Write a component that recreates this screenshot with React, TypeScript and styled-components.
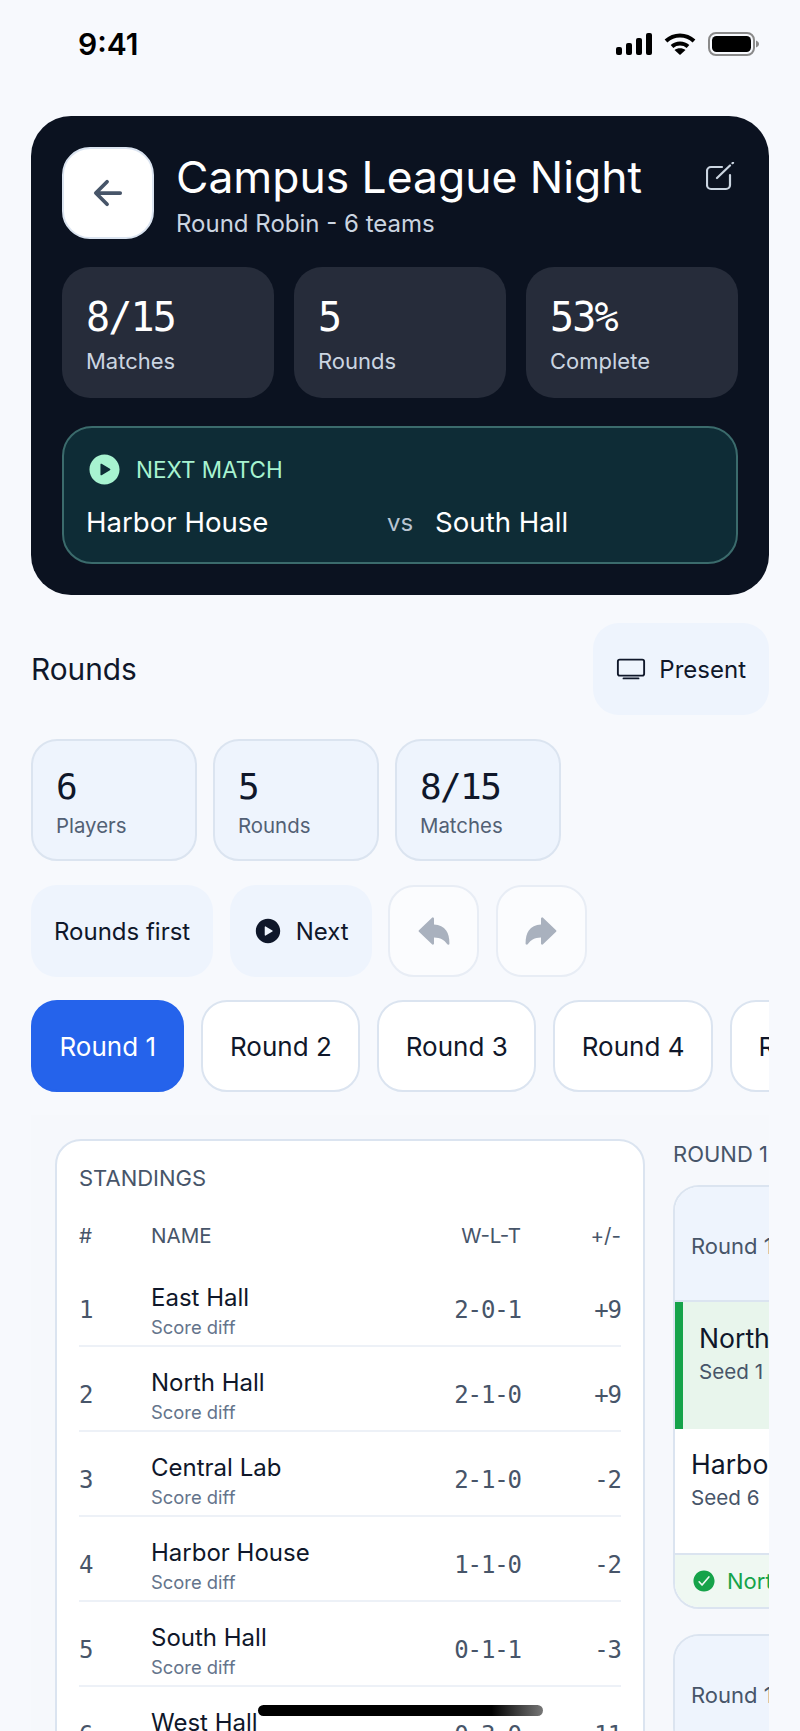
import React from 'react';
import styled, { createGlobalStyle } from 'styled-components';
import {
  IoArrowBack,
  IoArrowRedo,
  IoArrowUndo,
  IoCheckmarkCircle,
  IoPlayCircle,
  IoTvOutline,
} from 'react-icons/io5';

const SANS = `Inter, "Liberation Sans", sans-serif`;
const MONO = `"DejaVu Sans Mono", "Liberation Mono", monospace`;

const GlobalStyle = createGlobalStyle`
  html, body {
    margin: 0;
    padding: 0;
    background: #f7f9fd;
  }
  body {
    font-family: ${SANS};
    color: #0f172a;
  }
  * {
    box-sizing: border-box;
  }
`;

const Page = styled.div`
  position: relative;
  width: 800px;
  height: 1731px;
  overflow: hidden;
`;

const StatusBar = styled.div`
  height: 88px;
  padding: 0 41px 0 78px;
  display: flex;
  align-items: center;
  justify-content: space-between;
`;

const Clock = styled.span`
  font-size: 30px;
  font-weight: 600;
  color: #000;
`;

const StatusIcons = styled.div`
  display: flex;
  align-items: center;
  gap: 12px;
`;

const Main = styled.main`
  padding: 28px 31px 0;
  display: flex;
  flex-direction: column;
`;

const Hero = styled.section`
  height: 479px;
  padding: 31px;
  background: #0b1220;
  border-radius: 40px;
  display: flex;
  flex-direction: column;
`;

const HeroTop = styled.div`
  display: flex;
  gap: 22px;
  align-items: flex-start;
`;

const BackButton = styled.div`
  width: 92px;
  height: 92px;
  flex: none;
  border-radius: 28px;
  background: #fff;
  border: 2px solid #dbe4f0;
  color: #475569;
  display: flex;
  align-items: center;
  justify-content: center;
`;

const HeroText = styled.div`
  flex: 1;
  min-width: 0;
`;

const HeroTitle = styled.h1`
  margin: 0;
  font-size: 44.4px;
  line-height: 60px;
  font-weight: 400;
  color: #fff;
`;

const HeroSub = styled.div`
  margin-top: 1px;
  font-size: 24px;
  line-height: 31px;
  color: #cbd5e1;
`;

const EditIcon = styled.svg`
  flex: none;
  margin-top: 15px;
`;

const HeroStats = styled.div`
  display: grid;
  grid-template-columns: repeat(3, 1fr);
  gap: 20px;
  margin-top: 28px;
`;

const HeroStat = styled.div`
  height: 131px;
  padding: 26px 24px;
  border-radius: 28px;
  background: #262c3a;
`;

const Value = styled.div<{ $dark?: boolean }>`
  font-family: ${MONO};
  font-size: ${(p) => (p.$dark ? '36px' : '40px')};
  letter-spacing: -0.045em;
  line-height: 48px;
  color: ${(p) => (p.$dark ? '#0f172a' : '#fff')};
`;

const HeroStatLabel = styled.div`
  font-size: 22px;
  line-height: 30px;
  margin-top: 5px;
  color: #cbd5e1;
`;

const NextPanel = styled.div`
  margin-top: 28px;
  height: 138px;
  padding: 23px 22px;
  border-radius: 30px;
  background: #0e2c36;
  border: 2px solid #3b6b6c;
`;

const NextLabel = styled.div`
  display: flex;
  align-items: center;
  gap: 13px;
  font-size: 22.5px;
  line-height: 37px;
  color: #a7f3d0;
`;

const NextTeams = styled.div`
  display: flex;
  align-items: center;
  gap: 22px;
  margin-top: 15px;
`;

const NextTeam = styled.div`
  flex: 1;
  font-size: 27.6px;
  line-height: 38px;
  color: #fff;
`;

const Versus = styled.span`
  font-size: 24px;
  color: #b8c4d2;
`;

const SectionHead = styled.div`
  margin-top: 28px;
  display: flex;
  align-items: center;
  justify-content: space-between;
`;

const SectionTitle = styled.h2`
  margin: 0;
  font-size: 29.8px;
  font-weight: 400;
`;

const SoftButton = styled.div`
  height: 92px;
  padding: 0 23px;
  display: flex;
  align-items: center;
  gap: 13px;
  border-radius: 26px;
  background: #eef4fd;
  font-size: 24px;
  color: #0f172a;
`;

const Summary = styled.div`
  margin-top: 24px;
  display: flex;
  gap: 16px;
`;

const SummaryCard = styled.div`
  width: 166px;
  height: 122px;
  padding: 22px 23px;
  border-radius: 26px;
  background: #eef4fd;
  border: 2px solid #dbe4f0;
`;

const SummaryLabel = styled.div`
  font-size: 20.4px;
  line-height: 28px;
  margin-top: 1px;
  color: #526074;
`;

const Toolbar = styled.div`
  margin-top: 24px;
  display: flex;
  gap: 16.5px;
`;

const IconButton = styled.div`
  width: 91px;
  height: 92px;
  border-radius: 26px;
  background: #fbfcfe;
  border: 2px solid #e8edf5;
  color: #a9b1be;
  display: flex;
  align-items: center;
  justify-content: center;
`;

const Tabs = styled.div`
  margin-top: 23px;
  display: flex;
  gap: 17px;
  overflow: hidden;
`;

const Tab = styled.div<{ $active?: boolean }>`
  flex: none;
  height: 92px;
  padding: 0 26.5px;
  display: flex;
  align-items: center;
  border-radius: 26px;
  font-size: 26px;
  border: 2px solid ${(p) => (p.$active ? '#2563eb' : '#dbe4f0')};
  background: ${(p) => (p.$active ? '#2563eb' : '#fff')};
  color: ${(p) => (p.$active ? '#fff' : '#0f172a')};
`;

const Board = styled.div`
  margin-top: 23px;
  padding: 24px 0 0 24px;
  display: flex;
  gap: 28px;
  overflow: hidden;
  background: #f6f8fc;
`;

const Standings = styled.section`
  flex: none;
  width: 590px;
  padding: 22px;
  background: #fff;
  border: 2px solid #dbe4f0;
  border-radius: 26px;
`;

const BlockTitle = styled.div`
  font-size: 22px;
  line-height: 30px;
  color: #475569;
`;

const StandingsHead = styled.div`
  margin: 27px 0 12px;
  height: 30px;
  display: grid;
  grid-template-columns: 72px 1fr 100px 100px;
  align-items: center;
  font-size: 20.6px;
  color: #475569;
`;

const AlignEnd = styled.span`
  text-align: right;
`;

const StandingRow = styled.div`
  height: 85px;
  padding-top: 15px;
  display: grid;
  grid-template-columns: 72px 1fr 100px 100px;
  align-items: center;
  border-bottom: 2px solid #edf1f7;
`;

const Rank = styled.span`
  margin-top: -2px;
  font-family: ${MONO};
  font-size: 24px;
  letter-spacing: -0.045em;
  color: #475569;
`;

const TeamName = styled.div`
  font-size: 24px;
  line-height: 30px;
  color: #0f172a;
`;

const TeamNote = styled.div`
  margin-top: 1px;
  font-size: 18.4px;
  line-height: 26px;
  color: #64748b;
`;

const Mono = styled.span`
  margin-top: -2px;
  font-family: ${MONO};
  font-size: 24px;
  letter-spacing: -0.045em;
  text-align: right;
  color: #475569;
`;

const RoundColumn = styled.div`
  flex: none;
  width: 300px;
`;

const RoundLabel = styled.div`
  font-size: 22px;
  line-height: 30px;
  color: #475569;
`;

const MatchCard = styled.div`
  margin-top: 16px;
  margin-bottom: 25px;
  border: 2px solid #dbe4f0;
  border-radius: 26px;
  overflow: hidden;
  background: #fff;
`;

const MatchHead = styled.div`
  height: 115px;
  padding: 4px 16px 0;
  display: flex;
  align-items: center;
  background: #eef4fd;
  border-bottom: 2px solid #dbe4f0;
  font-size: 22px;
  color: #475569;
`;

const MatchTeam = styled.div<{ $winner?: boolean }>`
  padding: ${(p) => (p.$winner ? '18px' : '17px')} 16px 0;
  height: ${(p) => (p.$winner ? '127px' : '124px')};
  background: ${(p) => (p.$winner ? '#e8f5ec' : '#fff')};
  border-left: ${(p) => (p.$winner ? '8px solid #16a34a' : 'none')};
`;

const MatchName = styled.div`
  font-size: 26.6px;
  line-height: 36px;
  color: #0f172a;
`;

const MatchSeed = styled.div`
  margin-top: 1px;
  font-size: 20.6px;
  line-height: 30px;
  color: #475569;
`;

const MatchFoot = styled.div`
  height: 54px;
  padding: 0 16px;
  display: flex;
  align-items: center;
  gap: 10px;
  background: #eff8f2;
  border-top: 2px solid #dbe4f0;
  font-size: 22px;
  color: #16a34a;
`;

const HomeIndicator = styled.div`
  position: absolute;
  left: 258px;
  top: 1705px;
  width: 285px;
  height: 11px;
  border-radius: 6px;
  background: linear-gradient(90deg, #000 82%, #777 100%);
`;

const STANDINGS = [
  { rank: 1, name: 'East Hall', record: '2-0-1', diff: '+9' },
  { rank: 2, name: 'North Hall', record: '2-1-0', diff: '+9' },
  { rank: 3, name: 'Central Lab', record: '2-1-0', diff: '-2' },
  { rank: 4, name: 'Harbor House', record: '1-1-0', diff: '-2' },
  { rank: 5, name: 'South Hall', record: '0-1-1', diff: '-3' },
  { rank: 6, name: 'West Hall', record: '0-3-0', diff: '-11' },
];

const SignalIcon = () => (
  <svg width="36" height="22" viewBox="0 0 36 22" fill="#000">
    <rect x="0" y="14" width="6" height="8" rx="2" />
    <rect x="10" y="10" width="6" height="12" rx="2" />
    <rect x="20" y="5" width="6" height="17" rx="2" />
    <rect x="30" y="0" width="6" height="22" rx="2" />
  </svg>
);

const WifiIcon = () => (
  <svg width="32" height="22" viewBox="0 0 32 22" fill="none" stroke="#000" strokeWidth="4">
    <path d="M2 8 C10 0.5 22 0.5 30 8" />
    <path d="M8 13.5 C12.5 9.5 19.5 9.5 24 13.5" />
    <path d="M16 22 L10.5 17 C13.5 14.5 18.5 14.5 21.5 17 Z" fill="#000" stroke="none" />
  </svg>
);

const BatteryIcon = () => (
  <svg width="51" height="24" viewBox="0 0 51 24">
    <rect x="1" y="1" width="45" height="22" rx="7" fill="none" stroke="#8a8a8a" strokeWidth="2" />
    <rect x="4" y="4" width="39" height="16" rx="4.5" fill="#000" />
    <path d="M48 8.5 C50 9.5 51 10.5 51 12 C51 13.5 50 14.5 48 15.5 Z" fill="#8a8a8a" />
  </svg>
);

const App = () => (
  <Page>
    <GlobalStyle />
    <StatusBar>
      <Clock>9:41</Clock>
      <StatusIcons>
        <SignalIcon />
        <WifiIcon />
        <BatteryIcon />
      </StatusIcons>
    </StatusBar>
    <Main>
      <Hero>
        <HeroTop>
          <BackButton>
            <IoArrowBack size={40} />
          </BackButton>
          <HeroText>
            <HeroTitle>Campus League Night</HeroTitle>
            <HeroSub>Round Robin - 6 teams</HeroSub>
          </HeroText>
          <EditIcon width="32" height="30" viewBox="0 0 32 30" fill="none" stroke="#cbd5e1" strokeWidth="2.2" strokeLinecap="round">
            <path d="M16 5 H5 a4 4 0 0 0 -4 4 V23 a4 4 0 0 0 4 4 H20 a4 4 0 0 0 4 -4 V13" />
            <path d="M11 16 L24 3.5 M26.5 1.2 L27 0.8" />
          </EditIcon>
        </HeroTop>
        <HeroStats>
          <HeroStat>
            <Value>8/15</Value>
            <HeroStatLabel>Matches</HeroStatLabel>
          </HeroStat>
          <HeroStat>
            <Value>5</Value>
            <HeroStatLabel>Rounds</HeroStatLabel>
          </HeroStat>
          <HeroStat>
            <Value>53%</Value>
            <HeroStatLabel>Complete</HeroStatLabel>
          </HeroStat>
        </HeroStats>
        <NextPanel>
          <NextLabel>
            <IoPlayCircle size={37} />
            NEXT MATCH
          </NextLabel>
          <NextTeams>
            <NextTeam>Harbor House</NextTeam>
            <Versus>vs</Versus>
            <NextTeam>South Hall</NextTeam>
          </NextTeams>
        </NextPanel>
      </Hero>
      <SectionHead>
        <SectionTitle>Rounds</SectionTitle>
        <SoftButton>
          <IoTvOutline size={30} />
          Present
        </SoftButton>
      </SectionHead>
      <Summary>
        <SummaryCard>
          <Value $dark>6</Value>
          <SummaryLabel>Players</SummaryLabel>
        </SummaryCard>
        <SummaryCard>
          <Value $dark>5</Value>
          <SummaryLabel>Rounds</SummaryLabel>
        </SummaryCard>
        <SummaryCard>
          <Value $dark>8/15</Value>
          <SummaryLabel>Matches</SummaryLabel>
        </SummaryCard>
      </Summary>
      <Toolbar>
        <SoftButton>Rounds first</SoftButton>
        <SoftButton>
          <IoPlayCircle size={30} />
          Next
        </SoftButton>
        <IconButton>
          <IoArrowUndo size={38} />
        </IconButton>
        <IconButton>
          <IoArrowRedo size={38} />
        </IconButton>
      </Toolbar>
      <Tabs>
        <Tab $active>Round 1</Tab>
        <Tab>Round 2</Tab>
        <Tab>Round 3</Tab>
        <Tab>Round 4</Tab>
        <Tab>Round 5</Tab>
      </Tabs>
      <Board>
        <Standings>
          <BlockTitle>STANDINGS</BlockTitle>
          <StandingsHead>
            <span>#</span>
            <span>NAME</span>
            <AlignEnd>W-L-T</AlignEnd>
            <AlignEnd>+/-</AlignEnd>
          </StandingsHead>
          {STANDINGS.map((row) => (
            <StandingRow key={row.rank}>
              <Rank>{row.rank}</Rank>
              <div>
                <TeamName>{row.name}</TeamName>
                <TeamNote>Score diff</TeamNote>
              </div>
              <Mono>{row.record}</Mono>
              <Mono>{row.diff}</Mono>
            </StandingRow>
          ))}
        </Standings>
        <RoundColumn>
          <RoundLabel>ROUND 1</RoundLabel>
          <MatchCard>
            <MatchHead>Round 1 - Match 1</MatchHead>
            <MatchTeam $winner>
              <MatchName>North Hall</MatchName>
              <MatchSeed>Seed 1</MatchSeed>
            </MatchTeam>
            <MatchTeam>
              <MatchName>Harbor House</MatchName>
              <MatchSeed>Seed 6</MatchSeed>
            </MatchTeam>
            <MatchFoot>
              <IoCheckmarkCircle size={26} />
              North Hall won
            </MatchFoot>
          </MatchCard>
          <MatchCard>
            <MatchHead>Round 1 - Match 2</MatchHead>
          </MatchCard>
        </RoundColumn>
      </Board>
    </Main>
    <HomeIndicator />
  </Page>
);

export default App;
